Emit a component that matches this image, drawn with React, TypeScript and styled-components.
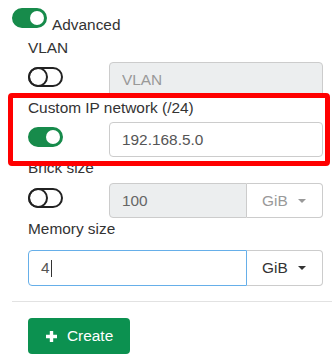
import styled, { createGlobalStyle } from "styled-components";

const GlobalStyle = createGlobalStyle`
  body {
    margin: 0;
    font-family: "Liberation Sans", Arial, sans-serif;
    font-size: 15.4px;
    color: #333;
    background: #fff;
  }
`;

const Page = styled.div`
  position: relative;
  width: 332px;
  height: 360px;
  padding: 8px 0 0 12px;
  box-sizing: border-box;
  overflow: hidden;
`;

const AdvancedRow = styled.div`
  display: flex;
  align-items: flex-start;
  gap: 5px;
`;

const SwitchText = styled.span`
  margin-top: 7px;
  line-height: 20px;
`;

const Switch = styled.span<{ $on?: boolean }>`
  display: flex;
  flex: none;
  align-items: center;
  justify-content: ${(p) => (p.$on ? "flex-end" : "flex-start")};
  width: 35px;
  height: 20px;
  box-sizing: border-box;
  border-radius: 10px;
  border: 2px solid ${(p) => (p.$on ? "#178b4b" : "#222")};
  background: ${(p) => (p.$on ? "#178b4b" : "transparent")};

  &::after {
    content: "";
    display: block;
    box-sizing: border-box;
    border-radius: 50%;
    width: ${(p) => (p.$on ? "14px" : "20px")};
    height: ${(p) => (p.$on ? "14px" : "20px")};
    margin: ${(p) => (p.$on ? "0 1px 0 0" : "0 0 0 -2px")};
    background: ${(p) => (p.$on ? "#fff" : "transparent")};
    border: ${(p) => (p.$on ? "none" : "2px solid #222")};
  }
`;

const Fields = styled.div`
  display: flex;
  flex-direction: column;
  gap: 1px;
  margin-top: 3px;
  padding: 0 9px 0 16px;
`;

const Field = styled.div`
  display: flex;
  flex-direction: column;
`;

const Label = styled.label<{ $gap?: number }>`
  line-height: 20px;
  margin-bottom: ${(p) => p.$gap ?? 4}px;
  color: #333;
`;

const Row = styled.div`
  display: grid;
  grid-template-columns: 81px 1fr;
  align-items: start;

  & > ${Switch} {
    margin-top: 5px;
  }
`;

const Group = styled.div`
  display: flex;
`;

const Input = styled.input<{ $grouped?: boolean }>`
  flex: 1;
  min-width: 0;
  width: 100%;
  height: 35px;
  box-sizing: border-box;
  padding: 0 12px;
  border: 1px solid #ccc;
  border-radius: ${(p) => (p.$grouped ? "4px 0 0 4px" : "4px")};
  font-family: inherit;
  font-size: 15.4px;
  color: #555;
  background: #fff;
  outline: none;

  &:disabled {
    background: #eceeef;
    color: #666;
  }
  &::placeholder {
    color: #999;
  }
`;

const FocusedInput = styled.div`
  flex: 1;
  display: flex;
  align-items: center;
  height: 36px;
  box-sizing: border-box;
  padding: 0 12px;
  border: 1px solid #66afe9;
  border-radius: 4px 0 0 4px;
  color: #555;
`;

const Caret = styled.span`
  display: inline-block;
  width: 1px;
  height: 17px;
  margin-left: 1px;
  background: #333;
`;

const UnitButton = styled.button<{ $disabled?: boolean; $tall?: boolean }>`
  display: flex;
  align-items: center;
  width: 76px;
  height: ${(p) => (p.$tall ? 36 : 35)}px;
  box-sizing: border-box;
  padding: 0 0 0 15px;
  border: 1px solid #ccc;
  border-left: none;
  border-radius: 0 4px 4px 0;
  background: #fff;
  font-family: inherit;
  font-size: 15.4px;
  color: ${(p) => (p.$disabled ? "#999" : "#333")};

  &::after {
    content: "";
    margin-left: 10px;
    border-top: 4px solid currentColor;
    border-left: 4px solid transparent;
    border-right: 4px solid transparent;
  }
`;

const Divider = styled.hr`
  margin: 15px 0 0;
  border: none;
  border-top: 1px solid #e2e2e2;
`;

const Footer = styled.div`
  padding: 16px 0 0 16px;
`;

const CreateButton = styled.button`
  display: flex;
  align-items: center;
  gap: 10px;
  height: 36px;
  padding: 0 17px 0 18px;
  border: none;
  border-radius: 4px;
  background: #0c9150;
  color: #fff;
  font-family: inherit;
  font-size: 15.4px;
`;

const PlusIcon = () => (
  <svg width="11" height="11" viewBox="0 0 11 11" aria-hidden="true">
    <path d="M5.5 0.5V10.5M0.5 5.5H10.5" stroke="#fff" strokeWidth="3.4" strokeLinecap="round" />
  </svg>
);

const Highlight = styled.div`
  position: absolute;
  left: 8px;
  top: 93px;
  width: 322px;
  height: 73px;
  box-sizing: border-box;
  border: 5px solid #ff0000;
  border-radius: 4px;
  pointer-events: none;
`;

export default function App() {
  return (
    <Page>
      <GlobalStyle />
      <AdvancedRow>
        <Switch $on />
        <SwitchText>Advanced</SwitchText>
      </AdvancedRow>
      <Fields>
        <Field>
          <Label>VLAN</Label>
          <Row>
            <Switch />
            <Input disabled placeholder="VLAN" />
          </Row>
        </Field>
        <Field>
          <Label>Custom IP network (/24)</Label>
          <Row>
            <Switch $on />
            <Input defaultValue="192.168.5.0" />
          </Row>
        </Field>
        <Field>
          <Label $gap={5}>Brick size</Label>
          <Row>
            <Switch />
            <Group>
              <Input $grouped disabled defaultValue="100" />
              <UnitButton $disabled>GiB</UnitButton>
            </Group>
          </Row>
        </Field>
        <Field>
          <Label $gap={11}>Memory size</Label>
          <Group>
            <FocusedInput>
              4<Caret />
            </FocusedInput>
            <UnitButton $tall>GiB</UnitButton>
          </Group>
        </Field>
      </Fields>
      <Divider />
      <Footer>
        <CreateButton>
          <PlusIcon />
          Create
        </CreateButton>
      </Footer>
      <Highlight />
    </Page>
  );
}
